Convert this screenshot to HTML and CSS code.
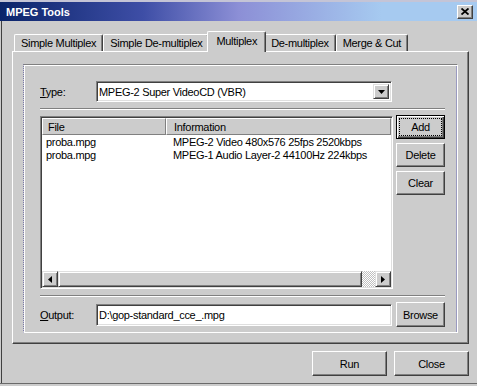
FILE: index.html
```html
<!DOCTYPE html>
<html lang="en">
<head>
  <meta charset="UTF-8">
  <title>MPEG Tools</title>
  <link rel="stylesheet" href="styles.css">
</head>
<body>
  <div class="window">
    <div class="titlebar">
      <span class="title">MPEG Tools</span>
      <button class="title-close">
        <svg width="8" height="7" viewBox="0 0 8 7"><path d="M0.5 0.5 L7.5 6.5 M7.5 0.5 L0.5 6.5" stroke="#000" stroke-width="1.8"/></svg>
      </button>
    </div>

    <div class="client">
      <div class="tabs">
        <div class="tab">Simple Multiplex</div>
        <div class="tab">Simple De-multiplex</div>
        <div class="tab active">Multiplex</div>
        <div class="tab">De-multiplex</div>
        <div class="tab">Merge &amp; Cut</div>
      </div>

      <div class="panel">
        <div class="group">
          <div class="field-row">
            <label class="label"><u>T</u>ype:</label>
            <div class="combo">
              <span class="combo-text">MPEG-2 Super VideoCD (VBR)</span>
              <span class="arrow-btn">
                <svg width="7" height="4" viewBox="0 0 7 4"><polygon points="0,0 7,0 3.5,4" fill="#000"/></svg>
              </span>
            </div>
          </div>

          <div class="sep"></div>

          <div class="list-row">
            <div class="listview">
              <div class="lv-head">
                <div class="lv-col col-file">File</div>
                <div class="lv-col col-info">Information</div>
              </div>
              <div class="lv-body">
                <div class="lv-item"><span class="cell-file">proba.mpg</span><span class="cell-info">MPEG-2 Video 480x576 25fps 2520kbps</span></div>
                <div class="lv-item"><span class="cell-file">proba.mpg</span><span class="cell-info">MPEG-1 Audio Layer-2 44100Hz 224kbps</span></div>
              </div>
              <div class="hscroll">
                <span class="arrow-btn sb-btn">
                  <svg width="4" height="7" viewBox="0 0 4 7"><polygon points="4,0 4,7 0,3.5" fill="#000"/></svg>
                </span>
                <span class="sb-thumb"></span>
                <span class="sb-track"></span>
                <span class="arrow-btn sb-btn">
                  <svg width="4" height="7" viewBox="0 0 4 7"><polygon points="0,0 0,7 4,3.5" fill="#000"/></svg>
                </span>
              </div>
            </div>

            <div class="side-buttons">
              <button class="btn default"><span class="focus">Add</span></button>
              <button class="btn">Delete</button>
              <button class="btn">Clear</button>
            </div>
          </div>

          <div class="sep"></div>

          <div class="field-row output-row">
            <label class="label"><u>O</u>utput:</label>
            <div class="textbox">D:\gop-standard_cce_.mpg</div>
            <button class="btn browse">Browse</button>
          </div>
        </div>
      </div>

      <div class="footer">
        <button class="btn wide">Run</button>
        <button class="btn wide">Close</button>
      </div>
    </div>
  </div>
</body>
</html>
```

FILE: styles.css
```css
:root {
  --face: #cccccc;
  --light: #ffffff;
  --shadow: #808080;
  --dark: #404040;
}
* { box-sizing: border-box; }
body {
  margin: 0;
  width: 477px; height: 386px; overflow: hidden;
  background: var(--face);
  font-family: "Liberation Sans", Arial, sans-serif;
  font-size: 11px; letter-spacing: -0.3px;
  color: #000;
}
button { font: inherit; color: inherit; letter-spacing: inherit; }

.window {
  height: 386px; display: flex; flex-direction: column;
  border-top: 2px solid #c4c4d6;
  padding-bottom: 2px;
}

/* title bar */
.titlebar {
  height: 19px; display: flex; align-items: center;
  padding: 0 4px 0 6px;
  background: linear-gradient(90deg, #0a246a 0%, #3e4ea6 30%, #8c8fd6 50%, #a6caf0 80%);
}
.title { color: #fff; font-weight: bold; letter-spacing: 0; flex: 1; }
.title-close {
  width: 16px; height: 14px; padding: 0;
  display: flex; align-items: center; justify-content: center;
  background: var(--face);
  border: 1px solid; border-color: var(--light) var(--dark) var(--dark) var(--light);
  box-shadow: inset -1px -1px var(--shadow);
}

.client {
  flex: 1; display: flex; flex-direction: column;
  padding-top: 10px;
  border-bottom: 1px solid #6a6a6a;
  box-shadow: inset 1px 0 var(--face), inset 2px 0 var(--dark);
}

/* tabs */
.tabs { height: 20px; display: flex; align-items: flex-end; padding-left: 14px; }
.tab {
  height: 17px; padding: 0 6px;
  display: flex; align-items: center;
  border: 1px solid var(--light); border-bottom: 0; border-right-color: var(--dark);
  border-radius: 2px 2px 0 0;
  box-shadow: inset -1px 0 var(--shadow);
  white-space: nowrap;
}
.tab.active {
  height: 21px; margin: 0 -2px -1px; padding: 0 8px 2px;
  background: var(--face); position: relative; z-index: 1;
}

.panel {
  margin-left: 12px; width: 457px;
  border: 1px solid var(--light); border-right-color: var(--dark); border-bottom-color: var(--dark);
  box-shadow: inset -1px -1px var(--shadow);
}

.group {
  margin: 12px 10px 10px;
  padding: 16px 12px 5px 16px;
  border-top: 1px solid var(--shadow);
  border-left: 1px dotted #7878a8;
  border-right: 1px solid var(--light);
  border-bottom: 1px solid var(--light);
  box-shadow: inset 1px 1px var(--light), inset -1px 0 #9a9ac0;
}

.field-row { display: flex; align-items: center; height: 21px; }
.label { width: 56px; }

/* sunken fields */
.combo, .textbox, .listview {
  background: #fff;
  border: 1px solid; border-color: var(--shadow) var(--light) var(--light) var(--shadow);
  box-shadow: inset 1px 1px var(--dark), inset -1px -1px #dfdfdf;
}
.combo {
  width: 296px; height: 21px; padding: 2px;
  display: flex; align-items: center;
}
.combo-text { flex: 1; }

.arrow-btn {
  width: 16px; height: 15px;
  display: flex; align-items: center; justify-content: center;
  background: var(--face);
  border: 1px solid; border-color: #dfdfdf var(--dark) var(--dark) #dfdfdf;
  box-shadow: inset 1px 1px var(--light), inset -1px -1px var(--shadow);
}

.sep {
  height: 2px; margin: 6px 0;
  border-top: 1px solid var(--shadow); border-bottom: 1px solid var(--light);
}
.output-row { height: 25px; margin-top: 5px; }
.list-row + .sep { margin-bottom: 0; }

/* list view */
.list-row { display: flex; gap: 3px; height: 173px; }
.listview {
  width: 353px; padding: 1px;
  display: flex; flex-direction: column;
}
.lv-head { display: flex; height: 17px; background: var(--face); }
.lv-col {
  height: 17px; display: flex; align-items: center;
  border: 1px solid; border-color: var(--light) var(--shadow) var(--shadow) var(--light);
}
.col-file { width: 124px; padding-left: 5px; }
.col-info { flex: 1; padding-left: 7px; }
.lv-body { flex: 1; padding-top: 1px; }
.lv-item { display: flex; height: 13px; line-height: 13px; white-space: nowrap; }
.cell-file { width: 124px; padding-left: 4px; }
.cell-info { padding-left: 7px; }

.hscroll { display: flex; height: 16px; }
.sb-btn { height: 16px; }
.sb-thumb {
  width: 304px; background: var(--face);
  border: 1px solid; border-color: #dfdfdf var(--dark) var(--dark) #dfdfdf;
  box-shadow: inset 1px 1px var(--light), inset -1px -1px var(--shadow);
}
.sb-track {
  flex: 1;
  background: repeating-conic-gradient(#fff 0 25%, #c0c0c0 0 50%) 0 0 / 2px 2px;
}

/* buttons */
.side-buttons { display: flex; flex-direction: column; gap: 4px; width: 49px; margin-top: -1px; }
.btn {
  height: 24px; padding: 0;
  display: flex; align-items: center; justify-content: center;
  background: var(--face);
  border: 1px solid; border-color: var(--light) var(--dark) var(--dark) var(--light);
  box-shadow: inset -1px -1px var(--shadow);
}
.btn.default {
  border-color: #000; padding: 2px;
  box-shadow: inset 1px 1px var(--light), inset -1px -1px var(--dark), inset -2px -2px var(--shadow);
}
.focus {
  flex: 1; align-self: stretch;
  display: flex; align-items: center; justify-content: center;
  border: 1px dotted #000;
}

.textbox { width: 296px; height: 22px; padding-left: 2px; display: flex; align-items: center; }
.browse { width: 49px; height: 25px; margin-left: 4px; }

.footer { display: flex; justify-content: flex-end; gap: 7px; padding: 7px 8px 0 0; }
.wide { width: 75px; height: 25px; }
```
